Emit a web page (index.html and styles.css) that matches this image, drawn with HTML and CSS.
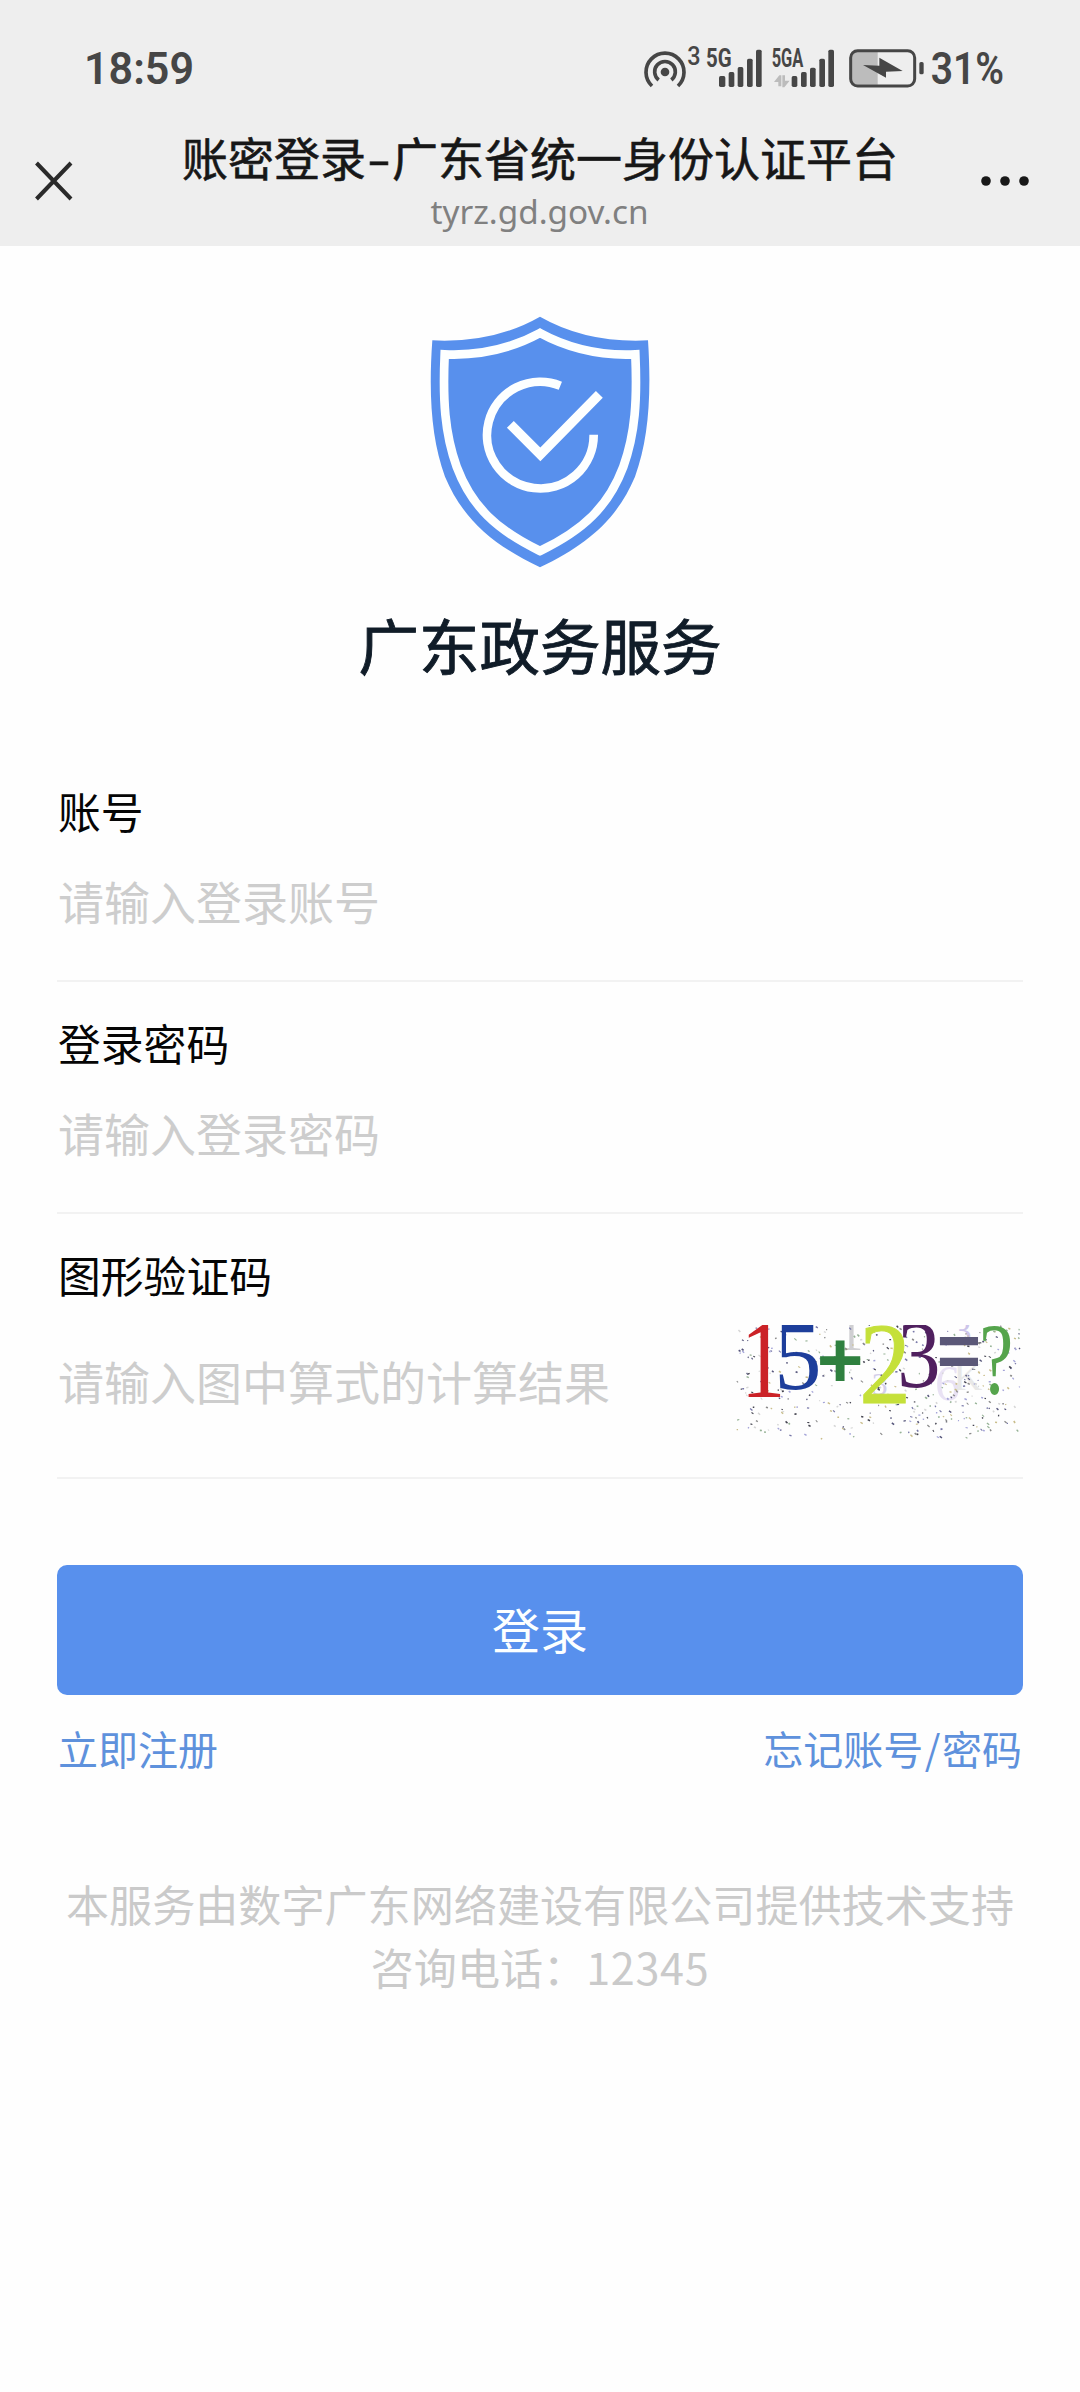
FILE: index.html
```html
<!DOCTYPE html>
<html lang="zh-CN">
<head>
<meta charset="utf-8">
<title>账密登录-广东省统一身份认证平台</title>
<link rel="stylesheet" href="styles.css">
</head>
<body>
<header class="top">
  <div class="status">
    <svg class="clock" viewBox="0 0 108 40"><text x="-1" y="38" textLength="110" lengthAdjust="spacingAndGlyphs">18:59</text></svg>
    <svg class="indicators" viewBox="0 0 1080 150">
      <g fill="none" stroke="#464646" stroke-width="11">
        <path d="M21 129A57 57 0 1 1 99 129"/>
        <path d="M41 111A31 31 0 1 1 79 111"/>
      </g>
      <circle cx="60" cy="87" r="13"/>
      <text x="127" y="67" font-size="76" textLength="40" lengthAdjust="spacingAndGlyphs">3</text>
      <text class="net" x="183" y="73" font-size="75" textLength="77" lengthAdjust="spacingAndGlyphs">5G</text>
      <text class="net" x="380" y="73" font-size="75" textLength="95" lengthAdjust="spacingAndGlyphs">5GA</text>
      <g>
        <rect x="222" y="99" width="19" height="33" rx="5"/><rect x="251" y="87" width="17" height="45" rx="5"/><rect x="278" y="72" width="17" height="60" rx="5"/><rect x="306" y="47" width="17" height="85" rx="5"/><rect x="333" y="20" width="17" height="112" rx="5"/>
        <rect x="440" y="99" width="17" height="33" rx="5"/><rect x="468" y="87" width="17" height="45" rx="5"/><rect x="495" y="74" width="17" height="58" rx="5"/><rect x="523" y="47" width="17" height="85" rx="5"/><rect x="550" y="20" width="17" height="112" rx="5"/>
      </g>
      <path fill="#bcbcbc" d="M387 117L403 97H409V130H400V117ZM412 97H420V113H434L418 133H412Z"/>
      <path fill="#bcbcbc" d="M634 25H698V125H634Q620 125 620 111V40Q620 25 634 25Z"/>
      <rect x="617" y="23" width="192" height="106" rx="21" fill="none" stroke="#464646" stroke-width="9"/>
      <rect x="823" y="57" width="13" height="37" rx="5"/>
      <path d="M654 66L703 68V44L773 84L723 86V104Z"/>
      <text class="level" x="857" y="124" font-size="134" textLength="220" lengthAdjust="spacingAndGlyphs">31%</text>
    </svg>
  </div>
  <nav class="nav">
    <svg class="close" viewBox="0 0 38 40"><path d="M1.5 2L36 38M36 2L1.5 38"/></svg>
    <div class="heading">
      <h1 class="page-name">账密登录<span class="dash">-</span>广东省统一身份认证平台</h1>
      <p class="host">tyrz.gd.gov.cn</p>
    </div>
    <svg class="more" viewBox="0 0 48 10"><circle cx="5" cy="5" r="4.8"/><circle cx="24" cy="5" r="4.8"/><circle cx="43" cy="5" r="4.8"/></svg>
  </nav>
</header>

<main class="content">
  <div class="brand">
    <svg class="shield" viewBox="90 48 660 756">
      <path fill="#5890ed" d="M420 50Q560 130 744 121C755 290 745 420 705 530C650 660 560 735 420 802C280 735 190 660 135 530C95 420 85 290 97 121Q280 130 420 50Z"/>
      <g fill="none" stroke="#fdffff" stroke-width="26">
        <path d="M420 99Q550 170 706 163C712 300 706 400 670 500C625 620 550 690 420 753C290 690 215 620 170 500C134 400 128 300 134 163Q290 170 420 99Z"/>
        <path d="M481 257A160 160 0 1 0 581 404"/>
        <path stroke-width="29" d="M331 373L421 463L598 283"/>
      </g>
    </svg>
    <h2 class="brand-name">广东政务服务</h2>
  </div>

  <form class="form">
    <label class="field">
      <span class="label">账号</span>
      <input class="input" type="text" placeholder="请输入登录账号">
    </label>
    <label class="field">
      <span class="label">登录密码</span>
      <input class="input" type="password" placeholder="请输入登录密码">
    </label>
    <div class="field">
      <span class="label">图形验证码</span>
      <div class="captcha-row">
        <input class="input" type="text" placeholder="请输入图中算式的计算结果">
        <svg class="captcha" viewBox="48 75 858 345">
          <g class="ghost">
            <text x="355" y="150" font-size="150" fill="#cfcfd2">1</text>
            <text x="700" y="128" font-size="110" fill="#cdc5ea">3</text>
            <text x="455" y="285" font-size="95" fill="#d3cfea">3</text>
            <text x="645" y="300" font-size="150" fill="#e9e2f4">6</text>
            <text x="700" y="270" font-size="120" fill="#e8e8e8">K</text>
          </g>
          <g id="noise"></g>
          <text x="62" y="292" font-size="334" fill="#cb2227" textLength="134" lengthAdjust="spacingAndGlyphs">1</text>
          <text x="163" y="266" font-size="290" fill="#1d3e9b" textLength="142" lengthAdjust="spacingAndGlyphs">5</text>
          <text class="sign" x="290" y="262" font-size="240" fill="#2f803f">+</text>
          <text x="418" y="308" font-size="350" fill="#c5e03a" stroke="#c5e03a" stroke-width="3" textLength="155" lengthAdjust="spacingAndGlyphs">2</text>
          <text x="532" y="262" font-size="285" fill="#50205f" textLength="130" lengthAdjust="spacingAndGlyphs">3</text>
          <text class="sign" x="650" y="232" font-size="228" fill="#5b5878">=</text>
          <text x="778" y="282" font-size="306" fill="#55a44c" textLength="102" lengthAdjust="spacingAndGlyphs">?</text>
        </svg>
      </div>
    </div>
    <button class="submit" type="button">登录</button>
    <div class="links"><a class="link">立即注册</a><a class="link">忘记账号<span class="slash">/</span>密码</a></div>
  </form>

  <footer class="support">
    <p class="support-line">本服务由数字广东网络建设有限公司提供技术支持</p>
    <p class="support-line">咨询电话：<span class="phone">12345</span></p>
  </footer>
</main>
<script src="script.js"></script>
</body>
</html>
```
FILE: styles.css
```css
* { box-sizing: border-box; margin: 0; padding: 0; }
body {
  width: 1080px;
  min-height: 2392px;
  background: #fefefe;
  color: #0a0a0a;
  font-family: "Noto Sans CJK SC", "Noto Sans", sans-serif;
}
.top { height: 246px; background: #eee; }
.status {
  display: flex;
  justify-content: space-between;
  height: 110px;
  padding: 43px 75px 0 85px;
  fill: #464646;
}
.status text { font-family: Roboto, sans-serif; font-weight: 500; }
.status .net { font-weight: 700; }
.status .level { font-weight: 600; }
.clock { width: 108px; height: 45px; font-size: 44px; overflow: visible; }
.clock text { font-weight: 600; }
.indicators { width: 360px; height: 50px; overflow: visible; }
.nav {
  display: flex;
  justify-content: space-between;
  padding: 0 51px 0 35px;
}
.close { width: 38px; height: 40px; margin-top: 51px; fill: none; stroke: #2a2a2a; stroke-width: 4; }
.more { width: 48px; height: 10px; margin-top: 66px; fill: #181818; }
.heading { text-align: center; padding: 14px 0 0 26px; }
.page-name { font-size: 46px; font-weight: 400; -webkit-text-stroke: 0.6px #171717; line-height: 64px; color: #171717; white-space: nowrap; }
.dash { display: inline-block; width: 26px; text-align: center; transform: scaleX(1.5); }
.host { margin-top: 1px; padding-right: 1px; font: 33.3px/44px "Noto Sans", sans-serif; color: #808080; }
.content { padding: 70px 57px 0; }
.brand { display: flex; flex-direction: column; align-items: center; }
.shield { width: 220px; height: 252px; }
.brand-name { margin-top: 31px; font-size: 60.5px; font-weight: 400; -webkit-text-stroke: 0.9px #101c28; line-height: 90px; color: #101c28; }
.form { margin-top: 62px; }
.field {
  display: block;
  height: 232px;
  padding-top: 28px;
  border-bottom: 2px solid #f2f2f2;
}
.field:first-child { height: 231px; padding-top: 27px; }
.field:nth-child(3) { height: 265px; }
.label { display: block; padding-left: 1px; font-size: 42.8px; line-height: 64px; color: #050505; }
.input {
  display: block;
  width: 100%;
  height: 68px;
  margin-top: 24px;
  padding-left: 1px;
  border: 0;
  outline: 0;
  background: transparent;
  font-family: inherit;
  font-size: 46px;
}
.input::placeholder { color: #cdcdcd; opacity: 1; }
.captcha-row { display: flex; align-items: flex-start; height: 115px; margin-top: 19px; }
.captcha-row .input { flex: 1; width: 0; margin-top: 21px; }
.captcha { width: 286px; height: 115px; margin-right: 1px; overflow: hidden; font-family: "Liberation Serif", serif; }
.sign { font-family: "Liberation Sans", sans-serif; font-weight: 700; }
.submit {
  display: block;
  width: 100%;
  height: 130px;
  margin-top: 86px;
  padding-bottom: 5px;
  border: 0;
  border-radius: 10px;
  background: #5890ed;
  color: #fcffff;
  font: 48px/124px "Noto Sans CJK SC", sans-serif;
}
.links { display: flex; justify-content: space-between; padding: 23px 1px 0; }
.link { font-size: 40px; line-height: 60px; color: #5e91dc; }
.slash { padding: 0 1.5px; }
.support { margin: 94px -20px 0; text-align: center; font-size: 43.1px; line-height: 63px; color: #cacaca; }
.phone { letter-spacing: 0.7px; }
```
FILE: script.js
```js
// Scatter the captcha's speckles; a fixed seed keeps the pattern stable.
var seed = 7;
function rnd() {
  seed = (seed * 16807) % 2147483647;
  return seed / 2147483647;
}
var colours = ['#55557a', '#7777a8', '#8a8a8a', '#444450', '#a4a4d8', '#c9bd8a', '#95b295', '#d6d6d6'];
var layer = document.getElementById('noise');
for (var i = 0; i < 430; i++) {
  var x = 50 + rnd() * 850, y = 76 + rnd() * 340;
  var p = document.createElementNS('http://www.w3.org/2000/svg', 'path');
  p.setAttribute('d', 'M' + x + ' ' + y + 'l' + (3 + rnd() * 4) + ' ' + (rnd() * 8 - 2));
  p.setAttribute('stroke', colours[Math.floor(rnd() * colours.length)]);
  p.setAttribute('stroke-width', 3 + rnd() * 2);
  layer.appendChild(p);
}
```
